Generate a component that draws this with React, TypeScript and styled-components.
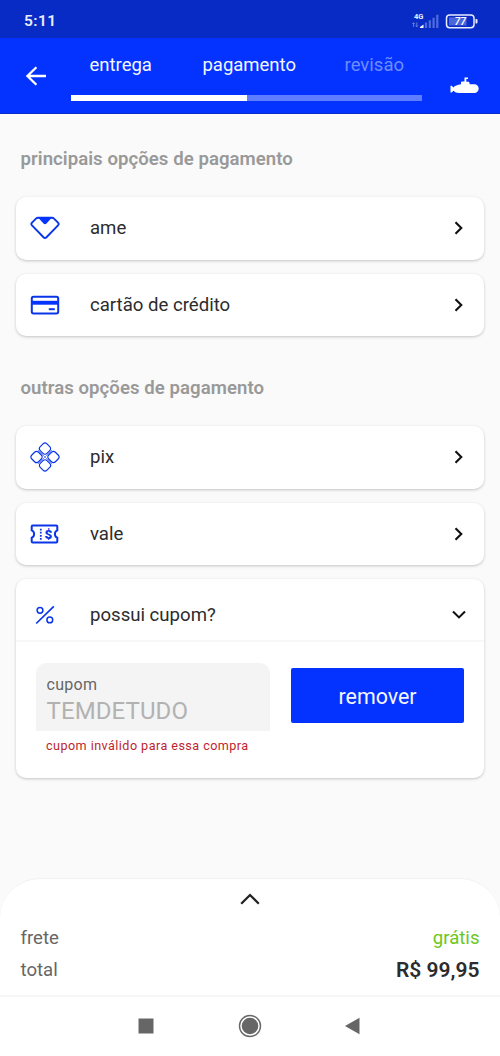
import React from 'react';
import styled, { createGlobalStyle } from 'styled-components';

const GlobalStyle = createGlobalStyle`
  * { box-sizing: border-box; }
  body { margin: 0; background: #fafafa; font-family: Roboto, 'Liberation Sans', sans-serif; color: #2c2c2e; }
  button { font: inherit; border: 0; padding: 0; background: none; color: inherit; text-align: left; }
  h2 { margin: 0; }
  svg { display: block; flex: none; }
`;

const Screen = styled.div`
  width: 500px;
  height: 1056px;
  display: flex;
  flex-direction: column;
  overflow: hidden;
  white-space: nowrap;
  background: #fafafa;
`;

const StatusBar = styled.div`
  height: 38px;
  flex: none;
  padding: 3px 22px 0 24px;
  display: flex;
  align-items: center;
  justify-content: space-between;
  background: #082bc5;
  color: #e8edff;
`;

const Clock = styled.span`
  padding-top: 1px;
  font-size: 15.5px;
  font-weight: 600;
  letter-spacing: 0.4px;
`;

const Header = styled.header`
  height: 76px;
  flex: none;
  display: flex;
  background: #0433ff;
  border-bottom: 1px solid #0b2ccb;
`;

const BackButton = styled.button`
  width: 71px;
  padding-left: 25px;
  display: flex;
  align-items: center;
`;

const Steps = styled.nav`
  width: 351px;
  padding-top: 15px;
`;

const StepLabels = styled.div`
  height: 42px;
  padding: 0 18px 0 18.5px;
  display: flex;
`;

const Step = styled.span<{ $pending?: boolean }>`
  font-size: 18.5px;
  line-height: 24px;
  color: ${(p) => (p.$pending ? '#6f8cff' : '#f4f6ff')};

  &:nth-child(2) { margin: 0 auto 0 50.5px; }
`;

const Progress = styled.div`
  height: 6px;
  background: #5f7eff;
`;

const ProgressFill = styled.div`
  width: 50%;
  height: 100%;
  background: #fff;
`;

const MascotSlot = styled.div`
  padding: 39px 0 0 28px;
`;

const Content = styled.main`
  height: 764px;
  flex: none;
  padding: 0 16px 0 15.5px;
`;

const SectionTitle = styled.h2<{ $top: number; $height: number }>`
  padding: ${(p) => p.$top}px 0 0 5px;
  height: ${(p) => p.$height}px;
  font-size: 18.6px;
  line-height: 24px;
  font-weight: 600;
  letter-spacing: 0.05px;
  color: #999;
`;

const CardList = styled.div`
  display: flex;
  flex-direction: column;
  gap: 14px;
`;

const Card = styled.section`
  border-radius: 10px;
  background: #fff;
  box-shadow: 0 1px 3px rgba(0, 0, 0, 0.22);
`;

const OptionRow = styled.button<{ $divided?: boolean }>`
  width: 100%;
  height: ${(p) => (p.$divided ? 63 : 62.5)}px;
  padding: ${(p) => (p.$divided ? 11 : 0)}px 18.5px 0 14px;
  display: flex;
  align-items: center;
  ${(p) => p.$divided && 'border-bottom: 2px solid #f8f8f8;'}
`;

const IconSlot = styled.span`
  width: 60.5px;
`;

const OptionLabel = styled.span`
  flex: 1;
  font-size: 18.6px;
  line-height: 24px;
`;

const CouponForm = styled.div`
  height: 136px;
  padding: 20.5px 20px 0 20.5px;
  display: flex;
  justify-content: space-between;
`;

const CouponField = styled.div`
  width: 234px;
`;

const FieldBox = styled.div`
  height: 68px;
  padding: 12.5px 10.5px 0;
  border-radius: 10px 10px 0 0;
  background: #f4f4f4;
`;

const FieldLabel = styled.div`
  font-size: 16px;
  line-height: 20px;
  letter-spacing: 0.3px;
  color: #666;
`;

const FieldValue = styled.div`
  padding-top: 2px;
  font-size: 24px;
  line-height: 28px;
  letter-spacing: 0.1px;
  color: #b2b2b2;
`;

const FieldError = styled.div`
  padding: 6px 10px 0;
  font-size: 12.6px;
  line-height: 17px;
  letter-spacing: 0.45px;
  color: #c01f2e;
`;

const RemoveButton = styled.button`
  width: 173px;
  height: 55px;
  margin-top: 5px;
  padding-top: 2px;
  border-radius: 2px;
  background: #0433ff;
  color: #f4f6ff;
  font-size: 21.4px;
  text-align: center;
`;

const Summary = styled.footer`
  height: 117px;
  flex: none;
  padding: 14px 20.5px 0;
  display: flex;
  flex-direction: column;
  align-items: center;
  border-radius: 40px 40px 0 0;
  border-top: 1.5px solid #f1f1f1;
  background: #fff;
`;

const SummaryLines = styled.div`
  width: 100%;
  padding-top: 17px;
`;

const SummaryLine = styled.div`
  height: 32px;
  display: flex;
  align-items: center;
  justify-content: space-between;
`;

const SummaryLabel = styled.span`
  font-size: 18.6px;
  color: #666;
`;

const Free = styled.span`
  font-size: 18.6px;
  color: #6cc71d;
`;

const Total = styled.strong`
  font-size: 21px;
  font-weight: 600;
`;

const SystemNav = styled.nav`
  height: 61px;
  flex: none;
  padding: 0 0 2px 138px;
  display: flex;
  align-items: center;
  border-top: 2px solid #f7f7f7;
  background: #fff;
`;

const NavItem = styled.span<{ $gap?: number }>`
  margin-right: ${(p) => p.$gap ?? 0}px;
`;

const blue = '#0a35e8';

const StatusIcons = () => (
  <svg width="66" height="20" viewBox="412 10 66 20">
    <text x="414" y="18.2" fontSize="7.5" fontWeight="700" fill="#e8edff">4G</text>
    <path d="M413.6 26v-4M412.4 23l1.2-1.3 1.2 1.3M416.8 21.5v4M415.6 24.5l1.2 1.3 1.2-1.3" fill="none" stroke="#7f93e6" strokeWidth=".8" />
    <path d="M420 27v-1l3.5-2.5V27z" fill="#fff" />
    <g fill="#4f6bdd">
      <path d="M424.9 21.5h2.2V27h-2.2zM428.7 19.2h2.2V27h-2.2zM432.5 16.7h2.2V27h-2.2zM436.2 13.8h2.2V27h-2.2z" />
    </g>
    <rect x="446.5" y="14" width="27.5" height="12.7" rx="3.2" fill="#082bc5" stroke="#e8edff" strokeWidth="1.5" />
    <path d="M449 16.3h17.5v8.2H449z" fill="#4a66d8" />
    <path d="M475.5 18h1q1 0 1 1v2.5q0 1-1 1h-1z" fill="#e8edff" />
    <text x="460.3" y="24.2" fontSize="10.5" fontWeight="500" fontStyle="italic" textAnchor="middle" fill="#fff">77</text>
  </svg>
);

const BackArrow = () => (
  <svg width="22" height="20" viewBox="0 0 22 20" fill="none" stroke="#fff" strokeWidth="2.3">
    <path d="M11.4 1.2L2.4 10l9 8.8M2.4 10H21" />
  </svg>
);

const Submarine = () => (
  <svg width="29" height="17" viewBox="0 0 29 17" fill="#fff">
    <path d="M14.5.5H18V2h-1.700v2.800h2.200q1 0 1.200 2.400h4.600a4.300 4.300 0 0 1 0 8.800H9Q5.500 16 3.300 13.800L1.800 15.500H.5V8.800h1.300l1.500 1.600Q5.500 8 11 7.200V5.500q0-.9.9-.9h2.600z" />
  </svg>
);

const AmeIcon = () => (
  <svg width="30" height="24" viewBox="0 0 30 24">
    <path d="M8 1.800h14q1.200 0 2 .8l4 4q1.300 1.400 0 2.800L16.500 21.200q-1.500 1.400-3 0L2 9.400Q.7 8 2 6.600l4-4q.8-.8 2-.8z" fill="none" stroke={blue} strokeWidth="1.900" />
    <path d="M8 1.500h14l-5.500 6q-1.500 1.300-3 0z" fill="#0433ff" />
  </svg>
);

const CreditCardIcon = () => (
  <svg width="30" height="20" viewBox="0 0 30 20">
    <rect x="1.800" y="1.800" width="26.400" height="16.600" rx="1.700" fill="none" stroke={blue} strokeWidth="2" />
    <path d="M1.500 5.800h27v3.900h-27z" fill="#0433ff" />
    <path d="M18.800 13.200h6v2h-6z" fill={blue} />
  </svg>
);

const PixIcon = () => (
  <svg width="30" height="30" viewBox="0 0 30 30" fill="none" stroke={blue} strokeWidth="1.200">
    <g transform="translate(15 15) rotate(45)">
      {[0, 90, 180, 270].map((angle) => (
        <rect key={angle} x="1.200" y="1.200" width="9.500" height="9.500" rx="2.800" transform={`rotate(${angle})`} />
      ))}
      <path d="M-10 0H10M0-10V10" strokeWidth=".5" />
    </g>
  </svg>
);

const VoucherIcon = () => (
  <svg width="29" height="20" viewBox="0 0 29 20">
    <path d="M2.700 1.600h23.600q1 0 1 1v3.800q-2.400.8-2.400 3.600t2.400 3.600v3.800q0 1-1 1H2.700q-1 0-1-1v-3.800Q4.100 12.800 4.100 10T1.700 6.400V2.600q0-1 1-1z" fill="none" stroke={blue} strokeWidth="2" />
    <path d="M10.800 4.700v11.600" stroke={blue} strokeWidth="1.800" strokeDasharray="1.800 1.300" />
    <text x="18.400" y="14.700" fontSize="13.500" fontWeight="900" textAnchor="middle" fill={blue}>$</text>
  </svg>
);

const PercentIcon = () => (
  <svg width="30" height="20" viewBox="0 0 30 20" fill="none" stroke={blue} strokeWidth="1.500">
    <path d="M6.200 18.500L23.800 1.300" strokeWidth="1.700" />
    <circle cx="10" cy="5.300" r="2.900" />
    <circle cx="19.800" cy="14.900" r="2.900" />
  </svg>
);

const ChevronRight = () => (
  <svg width="14" height="14" viewBox="0 0 14 14" fill="none" stroke="#111" strokeWidth="2.100">
    <path d="M3.500 1.200L9.300 7 3.500 12.800" />
  </svg>
);

const ChevronDown = () => (
  <svg width="14" height="14" viewBox="0 0 14 14" fill="none" stroke="#111" strokeWidth="2.100">
    <path d="M1 3.600l6 5.800 6-5.800" />
  </svg>
);

const ChevronUp = () => (
  <svg width="20" height="12" viewBox="0 0 20 12" fill="none" stroke="#222" strokeWidth="2.300">
    <path d="M1.200 10.700L10 2l8.800 8.700" />
  </svg>
);

const Option = ({ icon, label }: { icon: React.ReactNode; label: string }) => (
  <Card>
    <OptionRow>
      <IconSlot>{icon}</IconSlot>
      <OptionLabel>{label}</OptionLabel>
      <ChevronRight />
    </OptionRow>
  </Card>
);

export default function App() {
  return (
    <Screen>
      <GlobalStyle />
      <StatusBar>
        <Clock>5:11</Clock>
        <StatusIcons />
      </StatusBar>
      <Header>
        <BackButton aria-label="voltar"><BackArrow /></BackButton>
        <Steps>
          <StepLabels>
            <Step>entrega</Step>
            <Step>pagamento</Step>
            <Step $pending>revisão</Step>
          </StepLabels>
          <Progress><ProgressFill /></Progress>
        </Steps>
        <MascotSlot><Submarine /></MascotSlot>
      </Header>
      <Content>
        <SectionTitle $top={33} $height={83}>principais opções de pagamento</SectionTitle>
        <CardList>
          <Option icon={<AmeIcon />} label="ame" />
          <Option icon={<CreditCardIcon />} label="cartão de crédito" />
        </CardList>
        <SectionTitle $top={39.5} $height={90}>outras opções de pagamento</SectionTitle>
        <CardList>
          <Option icon={<PixIcon />} label="pix" />
          <Option icon={<VoucherIcon />} label="vale" />
          <Card>
            <OptionRow $divided>
              <IconSlot><PercentIcon /></IconSlot>
              <OptionLabel>possui cupom?</OptionLabel>
              <ChevronDown />
            </OptionRow>
            <CouponForm>
              <CouponField>
                <FieldBox>
                  <FieldLabel>cupom</FieldLabel>
                  <FieldValue>TEMDETUDO</FieldValue>
                </FieldBox>
                <FieldError>cupom inválido para essa compra</FieldError>
              </CouponField>
              <RemoveButton>remover</RemoveButton>
            </CouponForm>
          </Card>
        </CardList>
      </Content>
      <Summary>
        <ChevronUp />
        <SummaryLines>
          <SummaryLine>
            <SummaryLabel>frete</SummaryLabel>
            <Free>grátis</Free>
          </SummaryLine>
          <SummaryLine>
            <SummaryLabel>total</SummaryLabel>
            <Total>R$ 99,95</Total>
          </SummaryLine>
        </SummaryLines>
      </Summary>
      <SystemNav>
        <NavItem $gap={84}>
          <svg width="16" height="16"><path d="M.500 .500h15v15H.500z" fill="#666" /></svg>
        </NavItem>
        <NavItem $gap={83}>
          <svg width="24" height="24"><circle cx="12" cy="12" r="10.500" fill="none" stroke="#666" strokeWidth="1.400" /><circle cx="12" cy="12" r="8.300" fill="#666" /></svg>
        </NavItem>
        <NavItem>
          <svg width="15" height="18"><path d="M0 9L14.500 .800v16.400z" fill="#666" /></svg>
        </NavItem>
      </SystemNav>
    </Screen>
  );
}
